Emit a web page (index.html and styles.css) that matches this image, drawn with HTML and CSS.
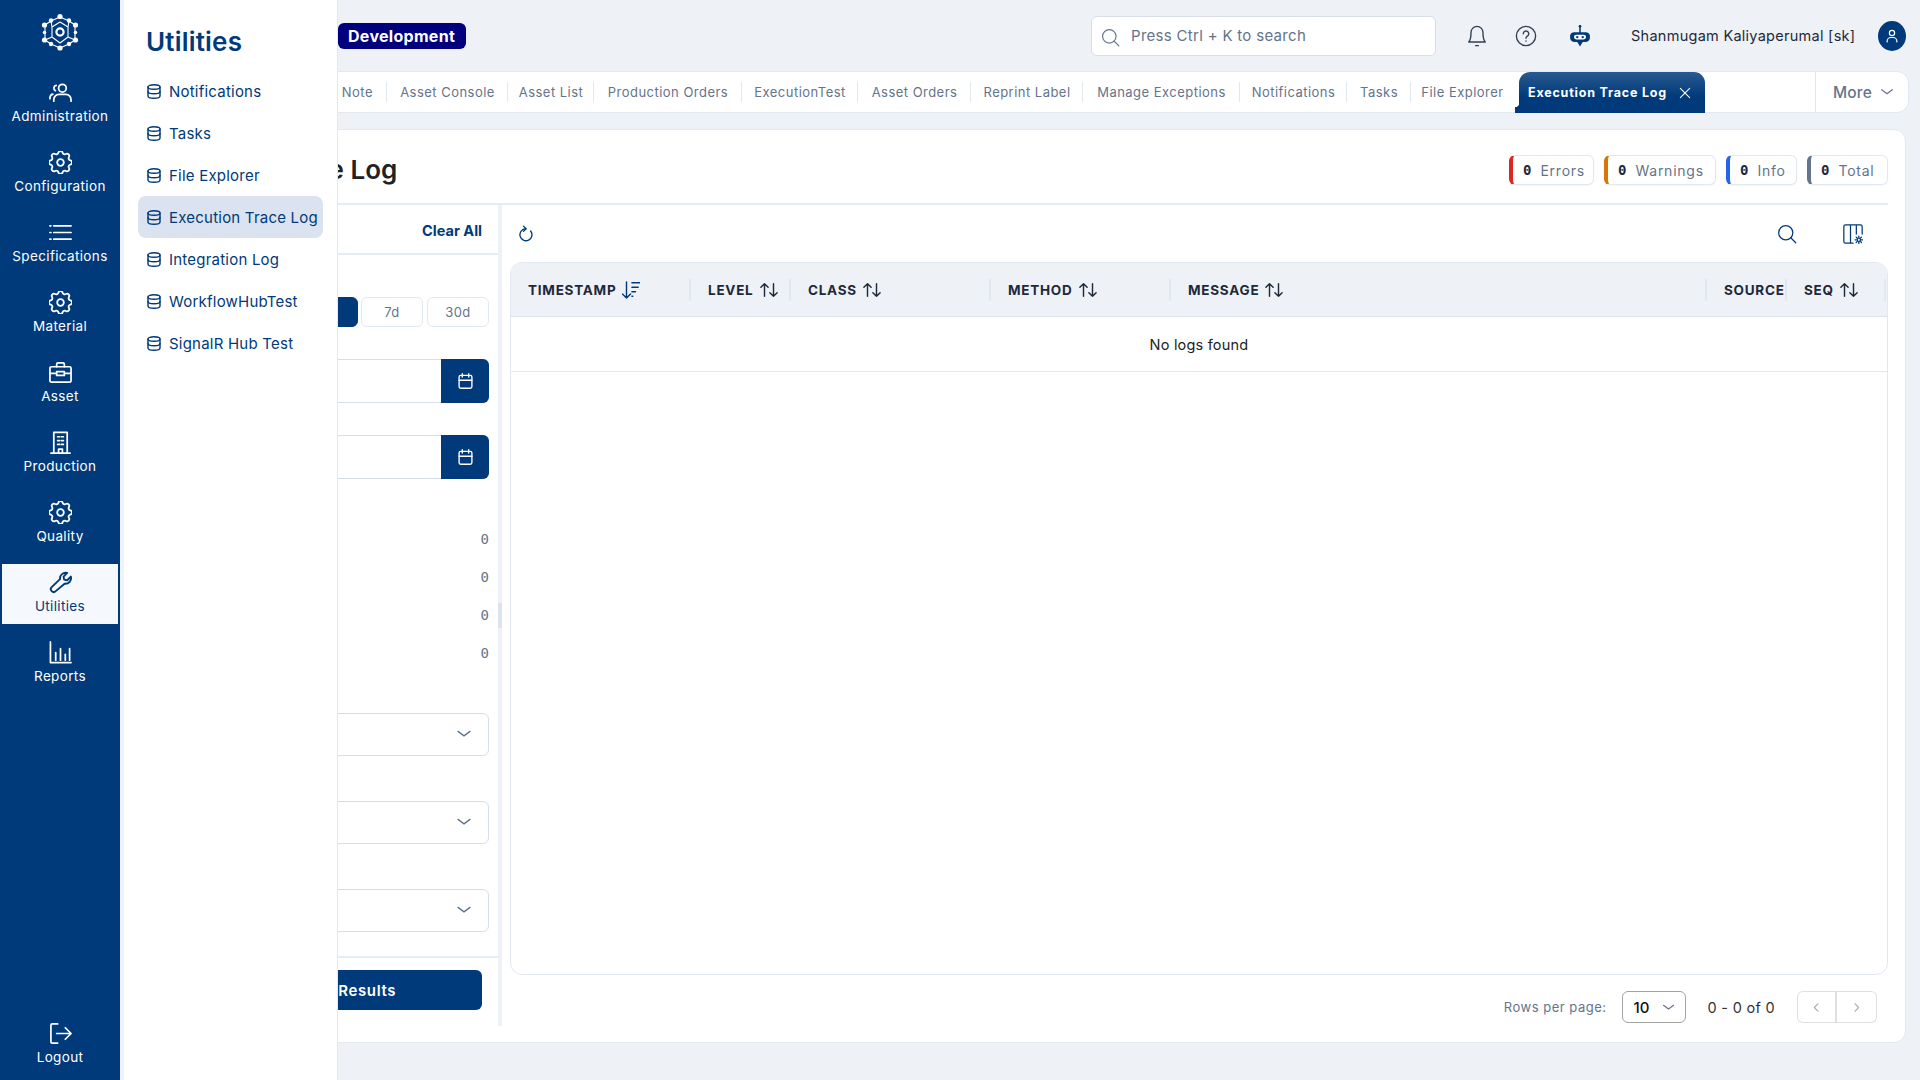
FILE: index.html
```html
<!DOCTYPE html>
<html lang="en">
<head>
    <meta charset="UTF-8">
    <meta name="viewport" content="width=device-width, initial-scale=1.0">
    <title>Execution Trace Log</title>
    <link rel="stylesheet" href="styles.css">
</head>
<body>
    <svg class="sprite" xmlns="http://www.w3.org/2000/svg">
        <symbol id="i-gear" viewBox="3 3 18 18"><path stroke-width="1.4" d="M10.325 4.317c.426-1.756 2.924-1.756 3.35 0a1.724 1.724 0 0 0 2.573 1.066c1.543-.94 3.31.826 2.37 2.37a1.724 1.724 0 0 0 1.065 2.572c1.756.426 1.756 2.924 0 3.35a1.724 1.724 0 0 0-1.066 2.573c.94 1.543-.826 3.31-2.37 2.37a1.724 1.724 0 0 0-2.572 1.065c-.426 1.756-2.924 1.756-3.35 0a1.724 1.724 0 0 0-2.573-1.066c-1.543.94-3.31-.826-2.37-2.37a1.724 1.724 0 0 0-1.065-2.572c-1.756-.426-1.756-2.924 0-3.35a1.724 1.724 0 0 0 1.066-2.573c-.94-1.543.826-3.31 2.37-2.37 1 .608 2.296.07 2.572-1.065z"/><circle stroke-width="1.4" cx="12" cy="12" r="2.600"/></symbol>
        <symbol id="i-db" viewBox="3 2 18 20"><ellipse cx="12" cy="6" rx="8" ry="3"/><path d="M4 6v6a8 3 0 0 0 16 0V6"/><path d="M4 12v6a8 3 0 0 0 16 0v-6"/></symbol>
        <symbol id="i-sort" viewBox="2 3 20 18"><path d="M3 9l4-4 4 4M7 5v14"/><path d="M21 15l-4 4-4-4M17 19V5"/></symbol>
        <symbol id="i-chev" viewBox="0 0 24 24"><path d="M4 8.500l8 6 8-6"/></symbol>
        <symbol id="i-cal" viewBox="3 2 18 20"><rect x="4" y="5" width="16" height="16" rx="2"/><path d="M16 3v4M8 3v4M4 11h16"/></symbol>
        <symbol id="i-search" viewBox="0 0 24 24"><circle cx="10.500" cy="10.500" r="8.500"/><path d="M16.500 16.500l6 6"/></symbol>
    </svg>

    <nav class="rail">
        <svg class="rail-logo" viewBox="0 0 36 36">
            <g class="logo-lines">
                <path d="M18 3L9 7 3 11M18 3l9 4 6 4M3 26l6 4 9 4 9-4 6-4M3 11v15M33 11v15"/>
                <path d="M10 13l8-5 8 5v10l-8 6-8-6zM9 7l1 6M27 7l-1 6M3 26l7-3M33 26l-7-3"/>
                <circle class="logo-ring" cx="18" cy="18" r="3.600"/>
            </g>
            <g class="logo-dots">
                <circle cx="18" cy="2.500" r="2.600"/><circle cx="9" cy="6.500" r="2.200"/><circle cx="27" cy="6.500" r="2.200"/>
                <circle cx="2.500" cy="11" r="2.600"/><circle cx="33.500" cy="11" r="2.600"/>
                <circle cx="2.500" cy="18.500" r="1.800"/><circle cx="33.500" cy="18.500" r="1.800"/>
                <circle cx="2.500" cy="26" r="2.600"/><circle cx="33.500" cy="26" r="2.600"/>
                <circle cx="9" cy="30" r="2.200"/><circle cx="27" cy="30" r="2.200"/><circle cx="18" cy="34" r="2.600"/>
            </g>
        </svg>

        <a class="rail-item">
            <svg class="rail-icon" viewBox="0 0 24 24"><circle cx="14" cy="7.500" r="4"/><path d="M5 21v-1.500a5.500 5.500 0 0 1 5.500-5.500h7a5.500 5.500 0 0 1 5.500 5.500V21"/><path d="M7.500 4.500a3 3 0 0 0-.8 5.600M1 18.500v-1a4 4 0 0 1 3-3.800"/></svg>
            <span>Administration</span>
        </a>
        <a class="rail-item">
            <svg class="rail-icon"><use href="#i-gear"/></svg>
            <span>Configuration</span>
        </a>
        <a class="rail-item">
            <svg class="rail-icon" viewBox="0 0 24 24"><path d="M5 5h18M5 12h18M5 19h18M1 5h1M1 12h1M1 19h1"/></svg>
            <span>Specifications</span>
        </a>
        <a class="rail-item">
            <svg class="rail-icon"><use href="#i-gear"/></svg>
            <span>Material</span>
        </a>
        <a class="rail-item">
            <svg class="rail-icon" viewBox="0 0 24 24"><rect x="1" y="6" width="22" height="16" rx="1.500"/><path d="M8 6V3.500A1.500 1.500 0 0 1 9.500 2h5A1.500 1.500 0 0 1 16 3.500V6M1 13h7M16 13h7M8 11h8v4H8z"/></svg>
            <span>Asset</span>
        </a>
        <a class="rail-item">
            <svg class="rail-icon" viewBox="0 0 24 24"><path d="M2 23h20M5 23V1.500h14V23M10 23v-4h4v4"/><path d="M9 6h2M13 6h2M9 10h2M13 10h2M9 14h2M13 14h2"/></svg>
            <span>Production</span>
        </a>
        <a class="rail-item">
            <svg class="rail-icon"><use href="#i-gear"/></svg>
            <span>Quality</span>
        </a>
        <a class="rail-item active">
            <svg class="rail-icon wrench" viewBox="0 0 24 24"><path d="M7 21a2.900 2.900 0 0 1-4.200-4.200l8.700-8.300a6 6 0 0 1 7.500-6.500l-3.800 3.800.6 3.200 3.200.6 3.800-3.800a6 6 0 0 1-6.500 7.500z"/></svg>
            <span>Utilities</span>
        </a>
        <a class="rail-item">
            <svg class="rail-icon" viewBox="0 0 24 24"><path d="M1.500 1v21.500H23M7 20v-8M12 20V8M17 20v-6M21.500 20V8"/></svg>
            <span>Reports</span>
        </a>
        <a class="rail-item logout">
            <svg class="rail-icon" viewBox="0 0 24 24"><path d="M9 2H3.500A1.500 1.500 0 0 0 2 3.500v17A1.500 1.500 0 0 0 3.500 22H9M8 12h15M17 6l6 6-6 6"/></svg>
            <span>Logout</span>
        </a>
    </nav>

    <aside class="flyout">
        <h2>Utilities</h2>
        <a class="flyout-item"><svg><use href="#i-db"/></svg>Notifications</a>
        <a class="flyout-item"><svg><use href="#i-db"/></svg>Tasks</a>
        <a class="flyout-item"><svg><use href="#i-db"/></svg>File Explorer</a>
        <a class="flyout-item active"><svg><use href="#i-db"/></svg>Execution Trace Log</a>
        <a class="flyout-item"><svg><use href="#i-db"/></svg>Integration Log</a>
        <a class="flyout-item"><svg><use href="#i-db"/></svg>WorkflowHubTest</a>
        <a class="flyout-item"><svg><use href="#i-db"/></svg>SignalR Hub Test</a>
    </aside>

    <div class="main">
        <header class="topbar">
            <span class="env-badge">Development</span>
            <div class="search-box">
                <svg class="search-icon"><use href="#i-search"/></svg>
                <span>Press Ctrl + K to search</span>
            </div>
            <svg class="top-icon bell" viewBox="0 0 24 24"><path d="M12 1.500a6.500 6.500 0 0 0-6.500 6.500c0 6-1 9-2.500 10.500h18c-1.500-1.500-2.500-4.500-2.500-10.500A6.500 6.500 0 0 0 12 1.500z"/><path d="M10.500 22.500h3"/></svg>
            <svg class="top-icon help" viewBox="0 0 24 24"><circle cx="12" cy="12" r="10.500"/><path d="M9 9.500a3 3 0 1 1 4.500 2.600c-1 .6-1.500 1.200-1.500 2.400M12 17.500v.1"/></svg>
            <svg class="bot" viewBox="0 0 20 20"><path class="bot-line" d="M10 1v6"/><circle cx="10" cy="1.200" r="1.200"/><path d="M5 6.500h10a4 4 0 0 1 4 3v2a4 4 0 0 1-4 4h-2.500L10 19.500 7.500 15.500H5a4 4 0 0 1-4-4v-2a4 4 0 0 1 4-3z"/><rect class="bot-eyes" x="4.500" y="8.800" width="11" height="4.400" rx="2.200"/><circle cx="7.500" cy="11" r="1.100"/><circle cx="12.500" cy="11" r="1.100"/></svg>
            <span class="user-name">Shanmugam Kaliyaperumal [sk]</span>
            <span class="avatar">
                <svg viewBox="0 0 24 24"><circle cx="12" cy="8" r="3.500"/><path d="M5.500 20v-1a5 5 0 0 1 5-5h3a5 5 0 0 1 5 5v1"/></svg>
            </span>
        </header>

        <div class="tabs">
            <a class="tab first">Note</a>
            <a class="tab">Asset Console</a>
            <a class="tab">Asset List</a>
            <a class="tab">Production Orders</a>
            <a class="tab">ExecutionTest</a>
            <a class="tab">Asset Orders</a>
            <a class="tab">Reprint Label</a>
            <a class="tab">Manage Exceptions</a>
            <a class="tab">Notifications</a>
            <a class="tab">Tasks</a>
            <a class="tab no-line">File Explorer</a>
            <a class="tab active">Execution Trace Log
                <svg viewBox="0 0 24 24"><path d="M4 4l16 16M20 4L4 20"/></svg>
            </a>
            <span></span>
            <a class="tab more">More <svg viewBox="0 0 24 24"><use href="#i-chev"/></svg></a>
        </div>

        <section class="card">
            <div class="title-row">
                <h1>Execution Trace Log</h1>
                <div class="stats">
                    <div class="stat errors"><b>0</b>Errors</div>
                    <div class="stat warnings"><b>0</b>Warnings</div>
                    <div class="stat info"><b>0</b>Info</div>
                    <div class="stat total"><b>0</b>Total</div>
                </div>
            </div>

            <div class="card-body">
                <div class="filters">
                    <div class="filters-head"><a>Clear All</a></div>
                    <div class="filters-body">
                        <div class="range-btns">
                            <button class="selected"></button>
                            <button>7d</button>
                            <button>30d</button>
                        </div>
                        <div class="date-input"><button><svg><use href="#i-cal"/></svg></button></div>
                        <div class="date-input"><button><svg><use href="#i-cal"/></svg></button></div>
                        <div class="counts">
                            <div>0</div>
                            <div>0</div>
                            <div>0</div>
                            <div>0</div>
                        </div>
                        <div class="select-box first-select"><svg><use href="#i-chev"/></svg></div>
                        <div class="select-box"><svg><use href="#i-chev"/></svg></div>
                        <div class="select-box"><svg><use href="#i-chev"/></svg></div>
                    </div>
                    <div class="filters-foot"><button>Results</button></div>
                </div>
                <div class="scroll-strip"><div class="scroll-thumb"></div></div>

                <div class="results">
                    <div class="toolbar">
                        <svg class="tool refresh" viewBox="0 0 20 24"><path d="M15.500 8A8 8 0 1 1 9 5"/><path d="M6 1.500L9.500 5 6 8.500"/></svg>
                        <svg class="tool tool-search"><use href="#i-search"/></svg>
                        <svg class="tool columns" viewBox="0 0 24 24"><path d="M12 23H3a2 2 0 0 1-2-2V3a2 2 0 0 1 2-2h18a2 2 0 0 1 2 2v9M9 1v22M16 1v11"/><circle cx="19" cy="19" r="2"/><path d="M19 14.500v1.500M19 22v1.500M14.500 19H16M22 19h1.500M15.800 15.800l1 1M21.200 21.200l1 1M22.200 15.800l-1 1M16.800 21.200l-1 1"/></svg>
                    </div>
                    <div class="table">
                        <div class="thead">
                            <div class="th">TIMESTAMP <svg class="sorted" viewBox="2 2 20 20"><path d="M7 3v18M2.500 16.500L7 21l4.500-4.500M13 4h9M13 9h7M13 14h4M13 19h1"/></svg></div>
                            <div class="th">LEVEL <svg><use href="#i-sort"/></svg></div>
                            <div class="th">CLASS <svg><use href="#i-sort"/></svg></div>
                            <div class="th">METHOD <svg><use href="#i-sort"/></svg></div>
                            <div class="th">MESSAGE <svg><use href="#i-sort"/></svg></div>
                            <div class="th">SOURCE</div>
                            <div class="th">SEQ <svg><use href="#i-sort"/></svg></div>
                        </div>
                        <div class="empty-row">No logs found</div>
                    </div>
                    <div class="pager">
                        <span class="rows-label">Rows per page:</span>
                        <div class="rows-select">10 <svg><use href="#i-chev"/></svg></div>
                        <span class="page-range">0 - 0 of 0</span>
                        <div class="page-btns">
                            <button><svg viewBox="0 0 24 24"><path d="M15 5l-7 7 7 7"/></svg></button>
                            <button><svg viewBox="0 0 24 24"><path d="M9 5l7 7-7 7"/></svg></button>
                        </div>
                    </div>
                </div>
            </div>
        </section>
    </div>
</body>
</html>
```

FILE: styles.css
```css
* {
    box-sizing: border-box;
}
html, body {
    margin: 0;
    height: 100%;
    overflow: hidden;
}
body {
    font-family: Inter, "Liberation Sans", sans-serif;
    background-color: #eef2f7;
    color: #1e293b;
}
svg {
    fill: none;
    stroke: currentColor;
    stroke-linecap: round;
    stroke-linejoin: round;
}
button {
    font-family: inherit;
    cursor: pointer;
}
.sprite {
    display: none;
}

/* left rail */
.rail {
    position: fixed;
    top: 0;
    left: 0;
    bottom: 0;
    z-index: 3;
    width: 120px;
    display: flex;
    flex-direction: column;
    align-items: center;
    padding: 14px 2px 5px;
    background-color: #003a7a;
}
.rail-logo {
    width: 36px;
    height: 36px;
    margin-bottom: 24px;
    flex-shrink: 0;
    overflow: visible;
}
.logo-lines {
    stroke: #fff;
    stroke-width: 1.1;
}
.logo-ring {
    stroke-width: 2.2;
}
.logo-dots {
    fill: #fff;
    stroke: none;
}
.rail-item {
    width: 100%;
    height: 60px;
    margin-bottom: 10px;
    display: flex;
    flex-direction: column;
    align-items: center;
    padding-top: 7px;
    color: #fff;
    font-size: 13.5px;
    line-height: 20px;
    letter-spacing: 0.35px;
}
.rail-icon {
    width: 23px;
    height: 23px;
    margin-bottom: 2px;
    stroke-width: 1.8;
}
.rail-icon.wrench {
    stroke-width: 2;
}
.rail-item.active {
    background-color: #f5f8fc;
    color: #003a7a;
}
.rail-item.logout {
    margin-top: auto;
    margin-bottom: 0;
}

/* flyout menu */
.flyout {
    position: fixed;
    top: 0;
    left: 120px;
    bottom: 0;
    z-index: 2;
    width: 218px;
    padding: 0 14px;
    background-color: #fff;
    border-left: 4px solid #f0f4f9;
    border-right: 1px solid #e2e8f0;
    color: #003a7a;
}
.flyout h2 {
    margin: 0;
    padding: 25px 0 0 8px;
    height: 70px;
    font-size: 26px;
    line-height: 34px;
    font-weight: 600;
    letter-spacing: 0.2px;
}
.flyout-item {
    height: 42px;
    display: flex;
    align-items: center;
    gap: 8px;
    padding-left: 9px;
    border-radius: 8px;
    font-size: 15px;
    white-space: nowrap;
    letter-spacing: 0.22px;
}
.flyout-item svg {
    width: 14px;
    height: 15px;
    stroke-width: 1.9;
    flex-shrink: 0;
}
.flyout-item.active {
    background-color: #dae3ef;
}

/* main column */
.main {
    margin-left: 120px;
    height: 100%;
    display: flex;
    flex-direction: column;
}
.topbar {
    height: 71px;
    flex-shrink: 0;
    display: flex;
    align-items: center;
    padding: 0 14px 0 218px;
}
.env-badge {
    height: 26px;
    padding: 0 11px 0 10px;
    display: flex;
    align-items: center;
    border-radius: 6px;
    background-color: #00007f;
    color: #fff;
    font-size: 16px;
    font-weight: 700;
    letter-spacing: 0.3px;
}
.search-box {
    width: 345px;
    height: 40px;
    margin-left: auto;
    display: flex;
    align-items: center;
    gap: 11px;
    padding-left: 9px;
    background-color: #fff;
    border: 1px solid #d5dee9;
    border-radius: 6px;
    color: #64748b;
    font-size: 15px;
    letter-spacing: 0.3px;
}
.search-icon {
    width: 19px;
    height: 19px;
    margin-top: 3px;
    stroke-width: 1.5;
}
.top-icon {
    width: 22px;
    height: 22px;
    color: #334155;
    stroke-width: 1.5;
}
.bell {
    margin-left: 30px;
}
.help {
    margin-left: 27px;
}
.bot {
    width: 22px;
    height: 22px;
    margin-left: 32px;
    fill: #003a7a;
    stroke: none;
}
.bot-line {
    stroke: #003a7a;
    stroke-width: 1.4;
}
.bot-eyes {
    fill: #fff;
}
.user-name {
    width: 225px;
    margin-left: 40px;
    margin-right: 22px;
    font-size: 14.5px;
    letter-spacing: 0.27px;
    white-space: nowrap;
}
.avatar {
    width: 28px;
    height: 30px;
    flex-shrink: 0;
    display: flex;
    align-items: center;
    justify-content: center;
    border-radius: 50%;
    background-color: #003a7a;
    color: #fff;
}
.avatar svg {
    width: 18px;
    height: 18px;
    stroke-width: 1.6;
}

/* open tabs */
.tabs {
    height: 42px;
    flex-shrink: 0;
    margin: 0 11px 0 16px;
    display: grid;
    grid-template-columns: 250px 121px 86px 148px 116px 113px 112px 157px 107px 64px 108px 186px 110px 97px;
    align-items: stretch;
    background-color: #fff;
    border: 1px solid #e2e8f0;
    border-radius: 12px;
}
.tab {
    position: relative;
    display: flex;
    align-items: center;
    justify-content: center;
    color: #64748b;
    font-size: 13px;
    letter-spacing: 0.47px;
    white-space: nowrap;
}
.tab::after {
    content: "";
    position: absolute;
    right: 0;
    top: 10px;
    bottom: 10px;
    width: 1px;
    background-color: #e2e8f0;
}
.tab.first {
    justify-content: flex-end;
    padding-right: 14px;
}
.tab.no-line {
    padding-right: 5px;
}
.tab.no-line::after,
.tab.more::after {
    display: none;
}
.tab.active {
    margin-bottom: -1px;
    gap: 11px;
    justify-content: flex-start;
    padding-left: 9px;
    background: linear-gradient(180deg, #2a5a8f, #003a7a 60%);
    border-radius: 11px 11px 0 0;
    color: #fff;
    font-weight: 700;
    font-size: 12.5px;
    letter-spacing: 0.8px;
}
/* little flare at the bottom left of the open tab */
.tab.active::after {
    right: auto;
    left: -4px;
    top: auto;
    bottom: 0;
    width: 4px;
    height: 10px;
    background: radial-gradient(circle at 0 0, transparent 4px, #003a7a 4.500px);
}
.tab.active svg {
    width: 14px;
    height: 14px;
    stroke-width: 1.8;
}
.tab.more {
    gap: 7px;
    border-left: 1px solid #e2e8f0;
    font-size: 15.5px;
    font-weight: 500;
    letter-spacing: 0.2px;
}
.tab.more svg {
    width: 16px;
    height: 16px;
    stroke-width: 1.8;
}

/* page card */
.card {
    height: 914px;
    margin: 16px 14px 0 16px;
    flex-shrink: 0;
    background-color: #fff;
    border: 1px solid #e2e8f0;
    border-radius: 12px;
}
.title-row {
    height: 75px;
    margin: 0 17px 0 15px;
    padding-top: 7px;
    display: flex;
    align-items: center;
    justify-content: space-between;
    border-bottom: 2px solid #e6ecf3;
}
.title-row h1 {
    margin: 0 0 2px -10px;
    font-size: 26px;
    font-weight: 600;
    color: #222;
    white-space: nowrap;
}
.stats {
    display: grid;
    grid-template-columns: 85px 112px 71px 81px;
    gap: 10px;
}
.stat {
    height: 30px;
    display: flex;
    align-items: center;
    gap: 9px;
    padding-left: 10px;
    background-color: #fff;
    border: 1px solid #e2e8f0;
    border-left-width: 4px;
    border-radius: 6px;
    box-shadow: 0 1px 2px rgba(0, 0, 0, 0.04);
    color: #64748b;
    font-size: 14px;
    letter-spacing: 0.75px;
}
.stat b {
    font-family: "DejaVu Sans Mono", "Liberation Mono", monospace;
    font-size: 14px;
    letter-spacing: 0;
    color: #1e293b;
}
.stat.errors {
    border-left-color: #dc2626;
}
.stat.warnings {
    border-left-color: #d97706;
}
.stat.info {
    border-left-color: #2563eb;
}
.stat.total {
    border-left-color: #64748b;
}
.card-body {
    height: 821px;
    display: flex;
}

/* filter column */
.filters {
    width: 361px;
    display: flex;
    flex-direction: column;
}
.filters-head {
    height: 50px;
    flex-shrink: 0;
    display: flex;
    align-items: center;
    justify-content: flex-end;
    padding: 2px 16px 0 0;
    border-bottom: 2px solid #e6ecf3;
    color: #003a7a;
    font-size: 14.5px;
    font-weight: 700;
}
.filters-body {
    flex: 1;
    padding: 42px 9px 0 15px;
}
.range-btns {
    display: flex;
    gap: 4px;
    height: 30px;
}
.range-btns button {
    width: 62px;
    background-color: #fff;
    border: 1px solid #e2e8f0;
    border-radius: 6px;
    color: #64748b;
    font-size: 13px;
    letter-spacing: 0.4px;
}
.range-btns .selected {
    flex: 1;
    margin-right: -1px;
    background-color: #003a7a;
    border-color: #003a7a;
}
.date-input {
    height: 44px;
    margin-top: 32px;
    display: flex;
    justify-content: flex-end;
    border: 1px solid #d5dee9;
    border-radius: 6px;
}
.date-input button {
    width: 48px;
    margin: -1px;
    display: flex;
    align-items: center;
    justify-content: center;
    background-color: #003a7a;
    border: none;
    border-radius: 0 6px 6px 0;
    color: #fff;
}
.date-input svg {
    width: 15px;
    height: 16px;
    stroke-width: 1.7;
}
.counts {
    margin-top: 41px;
    font-family: "DejaVu Sans Mono", "Liberation Mono", monospace;
    font-size: 14px;
    color: #64748b;
    text-align: right;
}
.counts div {
    height: 38px;
    line-height: 38px;
}
.select-box {
    height: 43px;
    margin-top: 45px;
    display: flex;
    align-items: center;
    justify-content: flex-end;
    padding: 0 15px 2px 0;
    border: 1px solid #d5dee9;
    border-radius: 6px;
    color: #64748b;
}
.select-box.first-select {
    margin-top: 41px;
}
.select-box svg {
    width: 18px;
    height: 18px;
    stroke-width: 1.8;
}
.filters-foot {
    height: 70px;
    flex-shrink: 0;
    padding: 12px 16px 0 15px;
    border-top: 2px solid #e6ecf3;
}
.filters-foot button {
    width: 100%;
    height: 40px;
    display: flex;
    align-items: center;
    justify-content: flex-end;
    padding-right: 86px;
    background-color: #003a7a;
    border: none;
    border-radius: 6px;
    color: #fff;
    font-size: 15px;
    font-weight: 600;
    letter-spacing: 0.6px;
}
.scroll-strip {
    width: 4px;
    flex-shrink: 0;
    padding-top: 398px;
    background-color: #eef2f7;
}
.scroll-thumb {
    height: 25px;
    background-color: #dbe3ee;
}

/* results column */
.results {
    flex: 1;
    min-width: 0;
    padding: 0 17px 0 8px;
}
.toolbar {
    height: 57px;
    display: flex;
    align-items: center;
    color: #003a7a;
}
.tool {
    width: 20px;
    height: 20px;
    stroke-width: 1.5;
}
.refresh {
    width: 15px;
    height: 18px;
    margin-left: 9px;
    stroke-width: 1.8;
}
.tool-search {
    margin-left: auto;
    margin-right: 46px;
}
.columns {
    margin-right: 25px;
}
.table {
    height: 713px;
    border: 1px solid #e2e8f0;
    border-radius: 12px;
    overflow: hidden;
}
.thead {
    height: 54px;
    display: grid;
    grid-template-columns: 180px 100px 200px 180px 536px 80px 99px;
    align-items: center;
    background-color: #eef2f7;
    border-bottom: 1px solid #dbe3ee;
}
.th {
    height: 22px;
    display: flex;
    align-items: center;
    gap: 6px;
    padding-left: 17px;
    border-right: 2px solid #e2e8f0;
    color: #1e293b;
    font-size: 13.5px;
    font-weight: 700;
    letter-spacing: 0.75px;
    white-space: nowrap;
    overflow: hidden;
}
.th svg {
    width: 18px;
    height: 18px;
    flex-shrink: 0;
    stroke-width: 1.6;
}
.th svg.sorted {
    color: #003a7a;
}
.empty-row {
    height: 55px;
    display: flex;
    align-items: center;
    justify-content: center;
    border-bottom: 1px solid #e2e8f0;
    font-size: 14.5px;
    letter-spacing: 0.2px;
    color: #222;
}
.pager {
    height: 64px;
    display: flex;
    align-items: center;
    justify-content: flex-end;
    padding-right: 11px;
}
.rows-label {
    color: #64748b;
    font-size: 13px;
    letter-spacing: 0.5px;
}
.rows-select {
    width: 64px;
    height: 32px;
    margin-left: 15px;
    display: flex;
    align-items: center;
    justify-content: space-between;
    padding: 0 9px 0 11px;
    border: 1px solid #a3a3a3;
    border-radius: 6px;
    color: #111;
    font-size: 15px;
    font-weight: 500;
}
.rows-select svg {
    width: 15px;
    height: 15px;
    color: #64748b;
    stroke-width: 1.8;
}
.page-range {
    margin: 0 22px;
    font-size: 14.5px;
    color: #333;
    letter-spacing: 0.3px;
}
.page-btns {
    display: flex;
    height: 32px;
}
.page-btns button {
    width: 40px;
    display: flex;
    align-items: center;
    justify-content: center;
    padding: 0;
    background-color: #fff;
    border: 1px solid #e0e0e0;
    color: #aaa;
}
.page-btns button:first-child {
    border-right-width: 2px;
    border-radius: 6px 0 0 6px;
}
.page-btns button:last-child {
    border-left: none;
    border-radius: 0 6px 6px 0;
}
.page-btns svg {
    width: 13px;
    height: 13px;
    stroke-width: 2;
}
```
